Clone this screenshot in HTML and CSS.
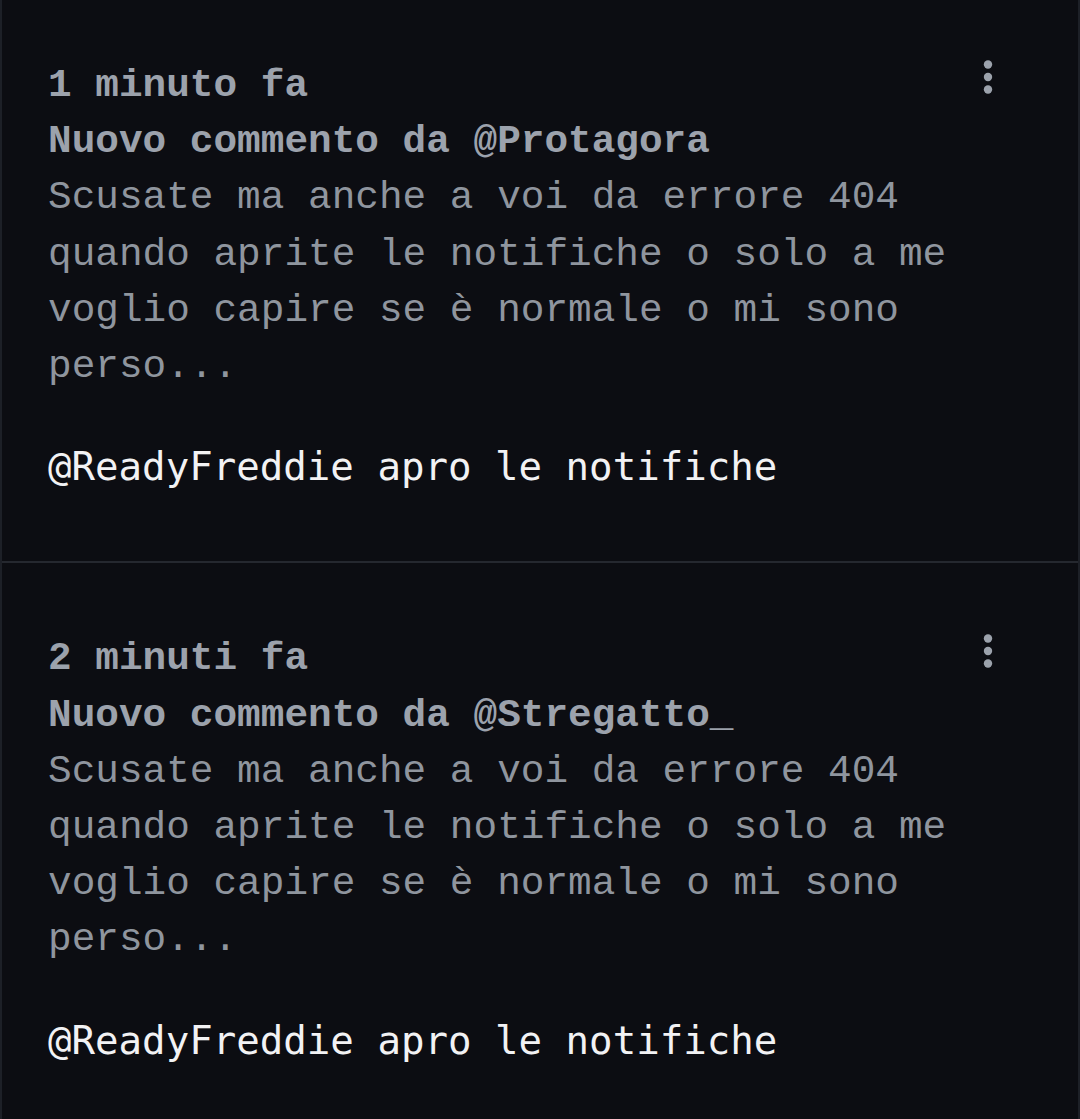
FILE: index.html
```html
<!DOCTYPE html>
<html lang="it">

<head>
    <meta charset="UTF-8">
    <meta name="viewport" content="width=device-width, initial-scale=1.0">
    <title>Notifiche</title>
    <link rel="stylesheet" href="styles.css">
</head>

<body>
    <div class="feed">
        <div class="notification">
            <div class="content">
                <div class="time">1 minuto fa</div>
                <div class="title">Nuovo commento da @Protagora</div>
                <p class="quote">Scusate ma anche a voi da errore 404 quando aprite le notifiche o solo a me voglio capire se è normale o mi sono perso...</p>
                <p class="reply">@ReadyFreddie apro le notifiche</p>
            </div>
            <button type="button" class="menu" aria-label="Altro">
                <svg width="40" height="40" viewBox="0 0 40 40">
                    <circle cx="20" cy="7.5" r="4.2" />
                    <circle cx="20" cy="20" r="4.2" />
                    <circle cx="20" cy="32.5" r="4.2" />
                </svg>
            </button>
        </div>
        <div class="notification">
            <div class="content">
                <div class="time">2 minuti fa</div>
                <div class="title">Nuovo commento da @Stregatto_</div>
                <p class="quote">Scusate ma anche a voi da errore 404 quando aprite le notifiche o solo a me voglio capire se è normale o mi sono perso...</p>
                <p class="reply">@ReadyFreddie apro le notifiche</p>
            </div>
            <button type="button" class="menu" aria-label="Altro">
                <svg width="40" height="40" viewBox="0 0 40 40">
                    <circle cx="20" cy="7.5" r="4.2" />
                    <circle cx="20" cy="20" r="4.2" />
                    <circle cx="20" cy="32.5" r="4.2" />
                </svg>
            </button>
        </div>
    </div>
</body>

</html>
```

FILE: styles.css
```css
body {
    margin: 0;
    background-color: #0c0d12;
    font-family: "Liberation Mono", "DejaVu Sans Mono", monospace;
    overflow: hidden;
}

.feed {
    margin-top: -11px;
    border-left: 2px solid #1d2027;
    border-right: 2px solid #1d2027;
}

.notification {
    display: flex;
    align-items: flex-start;
    padding: 68px 70px 68px 46px;
    border-bottom: 2px solid #25282f;
}

.notification:first-child {
    padding-top: 69px;
    padding-bottom: 66px;
}

.content {
    flex: 1;
    font-size: 39.4px;
    line-height: 56.2px;
}

.time,
.title {
    font-weight: bold;
    color: #9ca2ac;
}

.quote {
    margin: 0;
    color: #8f959e;
}

.reply {
    margin: 44px 0 0;
    color: #f2f2f4;
    font-family: "DejaVu Sans Mono", monospace;
    font-size: 39.1px;
}

.menu {
    width: 40px;
    height: 40px;
    padding: 0;
    border: none;
    background: none;
    cursor: pointer;
}

.notification:first-child .menu {
    margin-top: -1px;
}

.menu svg {
    display: block;
    fill: #9ca2ac;
}
```
